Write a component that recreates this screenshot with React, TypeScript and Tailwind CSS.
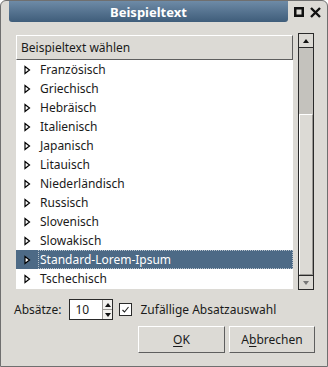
import React from "react";

const items = [
  "Französisch",
  "Griechisch",
  "Hebräisch",
  "Italienisch",
  "Japanisch",
  "Litauisch",
  "Niederländisch",
  "Russisch",
  "Slovenisch",
  "Slowakisch",
  "Standard-Lorem-Ipsum",
  "Tschechisch",
];

function Tri() {
  return (
    <svg width="7" height="10" viewBox="0 0 7 10" className="shrink-0">
      <polygon points="1,1.5 5.5,5 1,8.5" fill="#ffffff" stroke="#000000" strokeWidth="1.2" strokeLinejoin="miter" />
    </svg>
  );
}

export default function App() {
  return (
    <div
      className="w-[328px] h-[367px] bg-[#dcdad5] border border-[#6f6f6f] rounded-t-[6px] flex flex-col overflow-hidden text-[#1a1a1a]"
      style={{ fontFamily: '"Noto Sans", "Open Sans", sans-serif' }}
    >
      {/* title bar */}
      <div className="h-[21px] flex shrink-0">
        <div className="w-[8px]" />
        <div className="flex-1 rounded-b-[3px] bg-gradient-to-b from-[#6e8ba7] to-[#3f5d7a] flex items-center justify-center">
          <span className="text-white font-bold text-[13px] leading-none mt-[1px]">Beispieltext</span>
        </div>
        <div className="w-[39px] flex items-center gap-[6px] pl-[6px] pt-[1px]">
          <svg width="10" height="10" viewBox="0 0 10 10">
            <rect x="1.25" y="1.25" width="7.5" height="7.5" fill="none" stroke="#111" strokeWidth="2.5" />
          </svg>
          <svg width="11" height="11" viewBox="0 0 11 11">
            <path d="M1 1 L10 10 M10 1 L1 10" stroke="#111" strokeWidth="2.4" />
          </svg>
        </div>
      </div>

      {/* list + scrollbar */}
      <div className="flex mt-[11px] pl-[15px]">
        <div className="w-[277px] mt-[2px] flex flex-col">
          <div className="h-[25px] bg-[#dcdad5] border-t border-l border-white border-b border-r border-b-[#5e5e5e] border-r-[#5e5e5e] flex items-center pl-[4px] text-[12px]">
            Beispieltext wählen
          </div>
          <div className="bg-white h-[229px] flex flex-col">
            {items.map((it) => {
              const sel = it === "Standard-Lorem-Ipsum";
              return (
                <div
                  key={it}
                  className={
                    "h-[19px] flex items-center shrink-0 text-[12px] " +
                    (sel ? "bg-[#4d6a86] text-white" : "")
                  }
                >
                  <div className="w-[22px] flex justify-end pr-[7px]">
                    <Tri />
                  </div>
                  <div
                    className={
                      "flex-1 h-full flex items-center pl-[1px] pt-[1px] " +
                      (sel ? "border border-dotted border-[#b7c2cc]" : "border border-transparent")
                    }
                  >
                    {it}
                  </div>
                </div>
              );
            })}
          </div>
        </div>
        <div className="w-[16px] h-[257px] ml-[5px] flex flex-col border border-[#2a2a2a] bg-[#c4c2bd]">
          <div className="h-[14px] bg-[#dcdad5] border-b border-[#2a2a2a] flex items-center justify-center">
            <svg width="6" height="4" viewBox="0 0 6 4"><polygon points="0,4 3,0 6,4" fill="#111" /></svg>
          </div>
          <div className="h-[66px]" />
          <div className="flex-1 bg-[#dcdad5] border-t border-l border-white border-r border-r-[#9a9894] border-b border-b-[#9a9894]" />
          <div className="h-[14px] bg-[#dcdad5] border-t border-[#2a2a2a] flex items-center justify-center">
            <svg width="6" height="4" viewBox="0 0 6 4"><polygon points="0,0 6,0 3,4" fill="#777" /></svg>
          </div>
        </div>
      </div>

      {/* bottom controls */}
      <div className="flex items-center mt-[9px] pl-[13px] h-[21px] text-[12px]">
        <span>Absätze:</span>
        <div className="ml-[8px] w-[44px] h-[21px] bg-white border border-[#2a2a2a] flex">
          <div className="flex-1 flex items-center pl-[5px]">10</div>
          <div className="w-[10px] border-l border-[#9a9894] flex flex-col bg-[#f2f1ee]">
            <div className="flex-1 flex items-center justify-center border-b border-[#9a9894]">
              <svg width="6" height="4" viewBox="0 0 6 4"><polygon points="0,4 3,0 6,4" fill="#111" /></svg>
            </div>
            <div className="flex-1 flex items-center justify-center">
              <svg width="6" height="4" viewBox="0 0 6 4"><polygon points="0,0 6,0 3,4" fill="#111" /></svg>
            </div>
          </div>
        </div>
        <div className="ml-[6px] w-[13px] h-[13px] bg-white border border-[#2a2a2a] flex items-center justify-center">
          <svg width="9" height="9" viewBox="0 0 9 9">
            <path d="M1.5 5 L3.5 7 L7.5 2" fill="none" stroke="#222" strokeWidth="1.1" />
          </svg>
        </div>
        <span className="ml-[8px]">Zufällige Absatzauswahl</span>
      </div>

      <div className="flex justify-end gap-[4px] mt-[6px] pr-[12px] text-[12px]">
        <div className="w-[87px] h-[27px] border-t border-l border-white border-b border-r border-b-[#5e5e5e] border-r-[#5e5e5e] flex items-center justify-center">
          <span><span className="underline underline-offset-2">O</span>K</span>
        </div>
        <div className="w-[86px] h-[27px] border-t border-l border-white border-b border-r border-b-[#5e5e5e] border-r-[#5e5e5e] flex items-center justify-center">
          <span>A<span className="underline underline-offset-2">b</span>brechen</span>
        </div>
      </div>
    </div>
  );
}
